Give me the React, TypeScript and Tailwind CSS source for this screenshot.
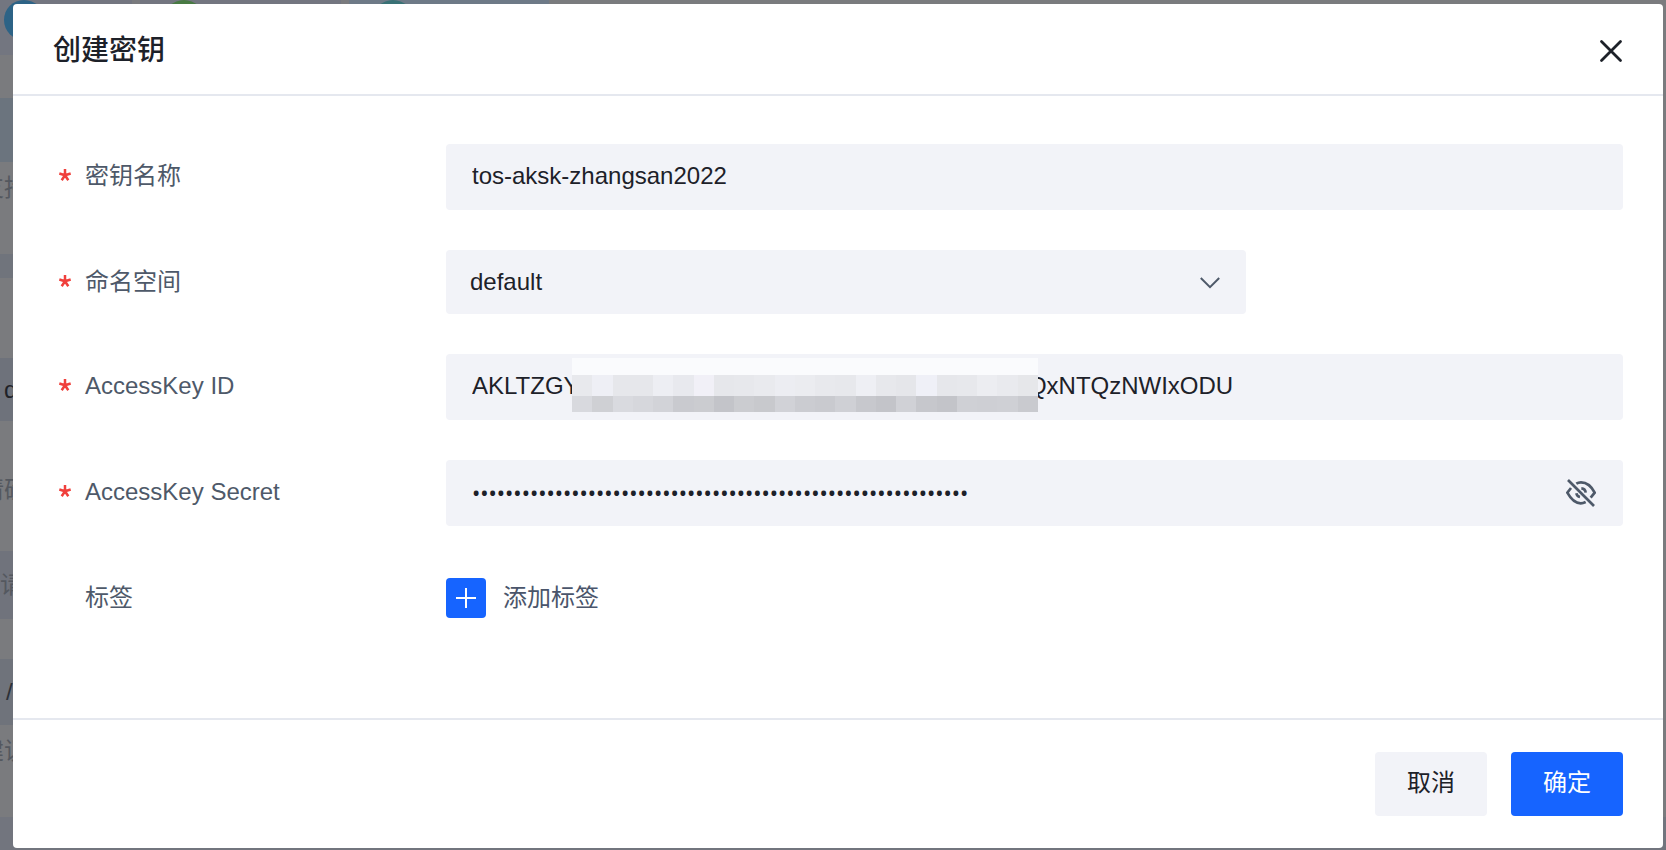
import React, { useState } from "react";

const maskTop = [
  "#e8e9ed", "#eeeff5", "#e6e7eb", "#e6e7eb", "#edeef3", "#e8e9ee", "#f1f0f7", "#e6e7eb",
  "#e7e8ec", "#e9eaee", "#ecedf2", "#ebecf0", "#e8e9ed", "#e7e8ec", "#eeeff4", "#e7e8ec",
  "#e5e6ea", "#eff0f7", "#e6e7eb", "#e7e8ec", "#ecedf1", "#e9eaee", "#e6e7ea",
];

const maskBottom = [
  "#d8d9de", "#cfd0d4", "#d9dadf", "#d6d7dc", "#d2d3d8", "#c9cacf", "#cbccd0", "#c3c4c9",
  "#cbccd0", "#c8c9cd", "#d1d2d7", "#cbccd1", "#c9cacf", "#cfd0d5", "#c7c8cd", "#c3c4c9",
  "#d0d1d6", "#c6c7cc", "#c3c4c9", "#cfd0d5", "#cecfd4", "#cfd0d5", "#c9cacf",
];

const Required = () => (
  <svg className="w-3 h-3 mb-0.5 shrink-0" viewBox="0 0 12 12" aria-hidden="true">
    <path
      d="M6 6.3V0M6 6.3L0.3 4.5M6 6.3L11.7 4.5M6 6.3L2.7 11.2M6 6.3L9.3 11.2"
      fill="none"
      stroke="#f0403c"
      strokeWidth="2.5"
    />
  </svg>
);

type FieldProps = {
  id: string;
  label: string;
  required?: boolean;
  children: React.ReactNode;
};

const Field = ({ id, label, required = true, children }: FieldProps) => (
  <div className="flex items-start">
    <label
      htmlFor={id}
      className="w-[393px] h-16 shrink-0 pl-1.5 flex items-center gap-3.5 text-[#4e5969]"
    >
      {required ? <Required /> : <span className="w-3" />}
      {label}
    </label>
    <div className="flex-1 min-w-0">{children}</div>
  </div>
);

// Covers the middle part of the key
const Mosaic = () => (
  <svg
    className="absolute left-[126px] top-1 w-[466px] h-[54px]"
    viewBox="0 0 460 54"
    preserveAspectRatio="none"
    shapeRendering="crispEdges"
    aria-hidden="true"
  >
    <rect width="460" height="54" fill="#fafbfd" />
    {maskTop.map((color, i) => (
      <rect key={i} x={i * 20} y="17" width="20" height="21" fill={color} />
    ))}
    {maskBottom.map((color, i) => (
      <rect key={i} x={i * 20} y="38" width="20" height="16" fill={color} />
    ))}
  </svg>
);

// Dimmed page behind the dialog
const Backdrop = () => (
  <div
    className="absolute inset-0 overflow-hidden flex flex-col bg-[#72757e] text-[#54585f] whitespace-nowrap"
    aria-hidden="true"
  >
    <div className="h-[55px] shrink-0 flex gap-2 bg-[#7a7b7e]">
      <div className="w-[132px] pl-1 bg-[#737680]">
        <div className="w-10 h-10 rounded-full bg-[#2d6386]" />
      </div>
      <div className="w-[201px] pl-6 bg-[#737680]">
        <div className="w-10 h-10 rounded-full bg-[#487a43]" />
      </div>
      <div className="w-[200px] pl-6 bg-[#6e7a87]">
        <div className="w-10 h-10 rounded-full bg-[#397175]" />
      </div>
    </div>
    <div className="h-[43px] shrink-0 bg-[#7a7b7e]" />
    <div className="h-16 shrink-0 flex bg-[#7a7b7e]">
      <div className="w-1/2 bg-[#6b747e]" />
    </div>
    <div className="h-[92px] shrink-0 pt-2.5 bg-[#7a7b7e]">
      <p className="-ml-5">支持</p>
    </div>
    <div className="h-6 shrink-0 flex bg-[#7a7b7e]">
      <div className="w-1/2 bg-[#70747c]" />
    </div>
    <div className="h-20 shrink-0 bg-[#7a7b7e]" />
    <div className="h-[63px] shrink-0 flex bg-[#7a7b7e]">
      <div className="w-1/2 pl-1 flex items-center bg-[#6e727b] text-[#1f2228]">default</div>
    </div>
    <div className="h-[130px] shrink-0 pt-2 flex items-center bg-[#7a7b7e]">
      <p className="-ml-5">请确认</p>
    </div>
    <div className="h-[68px] shrink-0 flex bg-[#7a7b7e]">
      <div className="w-1/2 flex items-center bg-[#70737c]">请输入</div>
    </div>
    <div className="h-10 shrink-0 bg-[#7a7b7e]" />
    <div className="h-[66px] shrink-0 flex bg-[#7a7b7e]">
      <div className="w-1/2 pl-1.5 flex items-center bg-[#6f737b] text-[#2c3037]">/</div>
    </div>
    <div className="h-[92px] shrink-0 pt-2.5 bg-[#7a7b7e]">
      <p className="-ml-5">建议</p>
    </div>
  </div>
);

const App = () => {
  const [name, setName] = useState("tos-aksk-zhangsan2022");
  const [keyId, setKeyId] = useState(`AKLTZGY${"*".repeat(48)}QxNTQzNWIxODU`);
  const [secret, setSecret] = useState("x".repeat(60));
  const [visible, setVisible] = useState(false);

  return (
    <div className="relative min-h-screen flex flex-col pt-1 pb-0.5 pl-[13px] pr-[3px] text-2xl font-['Liberation_Sans','Noto_Sans_CJK_SC',sans-serif]">
      <Backdrop />
      <div
        role="dialog"
        aria-labelledby="title"
        className="relative flex-1 flex flex-col rounded bg-white text-[#1d2129]"
      >
        {/* Header */}
        <header className="h-[92px] px-10 pt-[3px] flex items-center justify-between border-b-2 border-[#e5e8ef]">
          <h1 id="title" className="text-[28px] leading-10 font-medium">
            创建密钥
          </h1>
          <button type="button" aria-label="关闭">
            <svg className="w-6 h-6" viewBox="0 0 24 24">
              <path
                d="M2.5 2.5L21.5 21.5M21.5 2.5L2.5 21.5"
                fill="none"
                stroke="#1d2129"
                strokeWidth="2.8"
                strokeLinecap="round"
              />
            </svg>
          </button>
        </header>

        {/* Form */}
        <form className="flex-1 px-10 pt-12 pb-10 flex flex-col gap-10">
          <Field id="name" label="密钥名称">
            <input
              id="name"
              type="text"
              value={name}
              onChange={(e) => setName(e.target.value)}
              className="block w-full h-[66px] px-[26px] pb-0.5 rounded bg-[#f2f3f8] outline-none"
            />
          </Field>
          <Field id="namespace" label="命名空间">
            <div className="relative max-w-[800px]">
              <select
                id="namespace"
                className="block w-full h-16 px-6 rounded bg-[#f2f3f8] appearance-none outline-none"
              >
                <option>default</option>
              </select>
              <svg
                className="absolute right-[26px] top-[27px] w-5 h-3 pointer-events-none"
                viewBox="0 0 20 12"
                aria-hidden="true"
              >
                <path d="M0.8 1L10 10.2L19.2 1" fill="none" stroke="#4e5969" strokeWidth="2" />
              </svg>
            </div>
          </Field>
          <Field id="key-id" label="AccessKey ID">
            <div className="relative">
              <input
                id="key-id"
                type="text"
                value={keyId}
                onChange={(e) => setKeyId(e.target.value)}
                className="block w-full h-[66px] px-[26px] pb-0.5 rounded bg-[#f2f3f8] outline-none"
              />
              <Mosaic />
            </div>
          </Field>
          <Field id="key-secret" label="AccessKey Secret">
            <div className="h-[66px] pl-[26px] pr-[27px] flex items-center gap-4 rounded bg-[#f2f3f8]">
              <input
                id="key-secret"
                type={visible ? "text" : "password"}
                value={secret}
                onChange={(e) => setSecret(e.target.value)}
                className="flex-1 min-w-0 text-[22px] font-['Noto_Sans',sans-serif] outline-none"
              />
              <button type="button" aria-label="显示密钥" onClick={() => setVisible(!visible)}>
                <svg
                  className="w-[30px] h-[30px]"
                  viewBox="0 0 90 90"
                  fill="none"
                  stroke="#4e5969"
                  strokeWidth="8"
                >
                  <path d="M6 6L84 84" />
                  <path d="M31 17Q37 13 45 13C62 13 77 26 86 44L74 59" />
                  <path d="M15 30L4 44C14 62 28 76 44 76Q51 76 59 72" />
                  <path d="M46 31A14 14 0 0 1 59 44M31 46A14 14 0 0 0 42 57" />
                </svg>
              </button>
            </div>
          </Field>
          <Field id="add-tag" label="标签" required={false}>
            <button
              id="add-tag"
              type="button"
              className="h-16 flex items-center gap-[17px] text-[#4a556b]"
            >
              <span className="w-10 h-10 flex items-center justify-center rounded bg-[#1664ff]">
                <svg className="w-5 h-5" viewBox="0 0 20 20">
                  <path d="M10 0V20M0 10H20" stroke="#fff" strokeWidth="2" />
                </svg>
              </span>
              添加标签
            </button>
          </Field>
        </form>

        {/* Footer */}
        <footer className="px-10 py-8 flex justify-end gap-6 border-t-2 border-[#e5e8ef]">
          <button type="button" className="w-28 h-16 pb-0.5 rounded bg-[#f2f3f8]">
            取消
          </button>
          <button type="button" className="w-28 h-16 pb-0.5 rounded bg-[#1664ff] text-white">
            确定
          </button>
        </footer>
      </div>
    </div>
  );
};

export default App;
